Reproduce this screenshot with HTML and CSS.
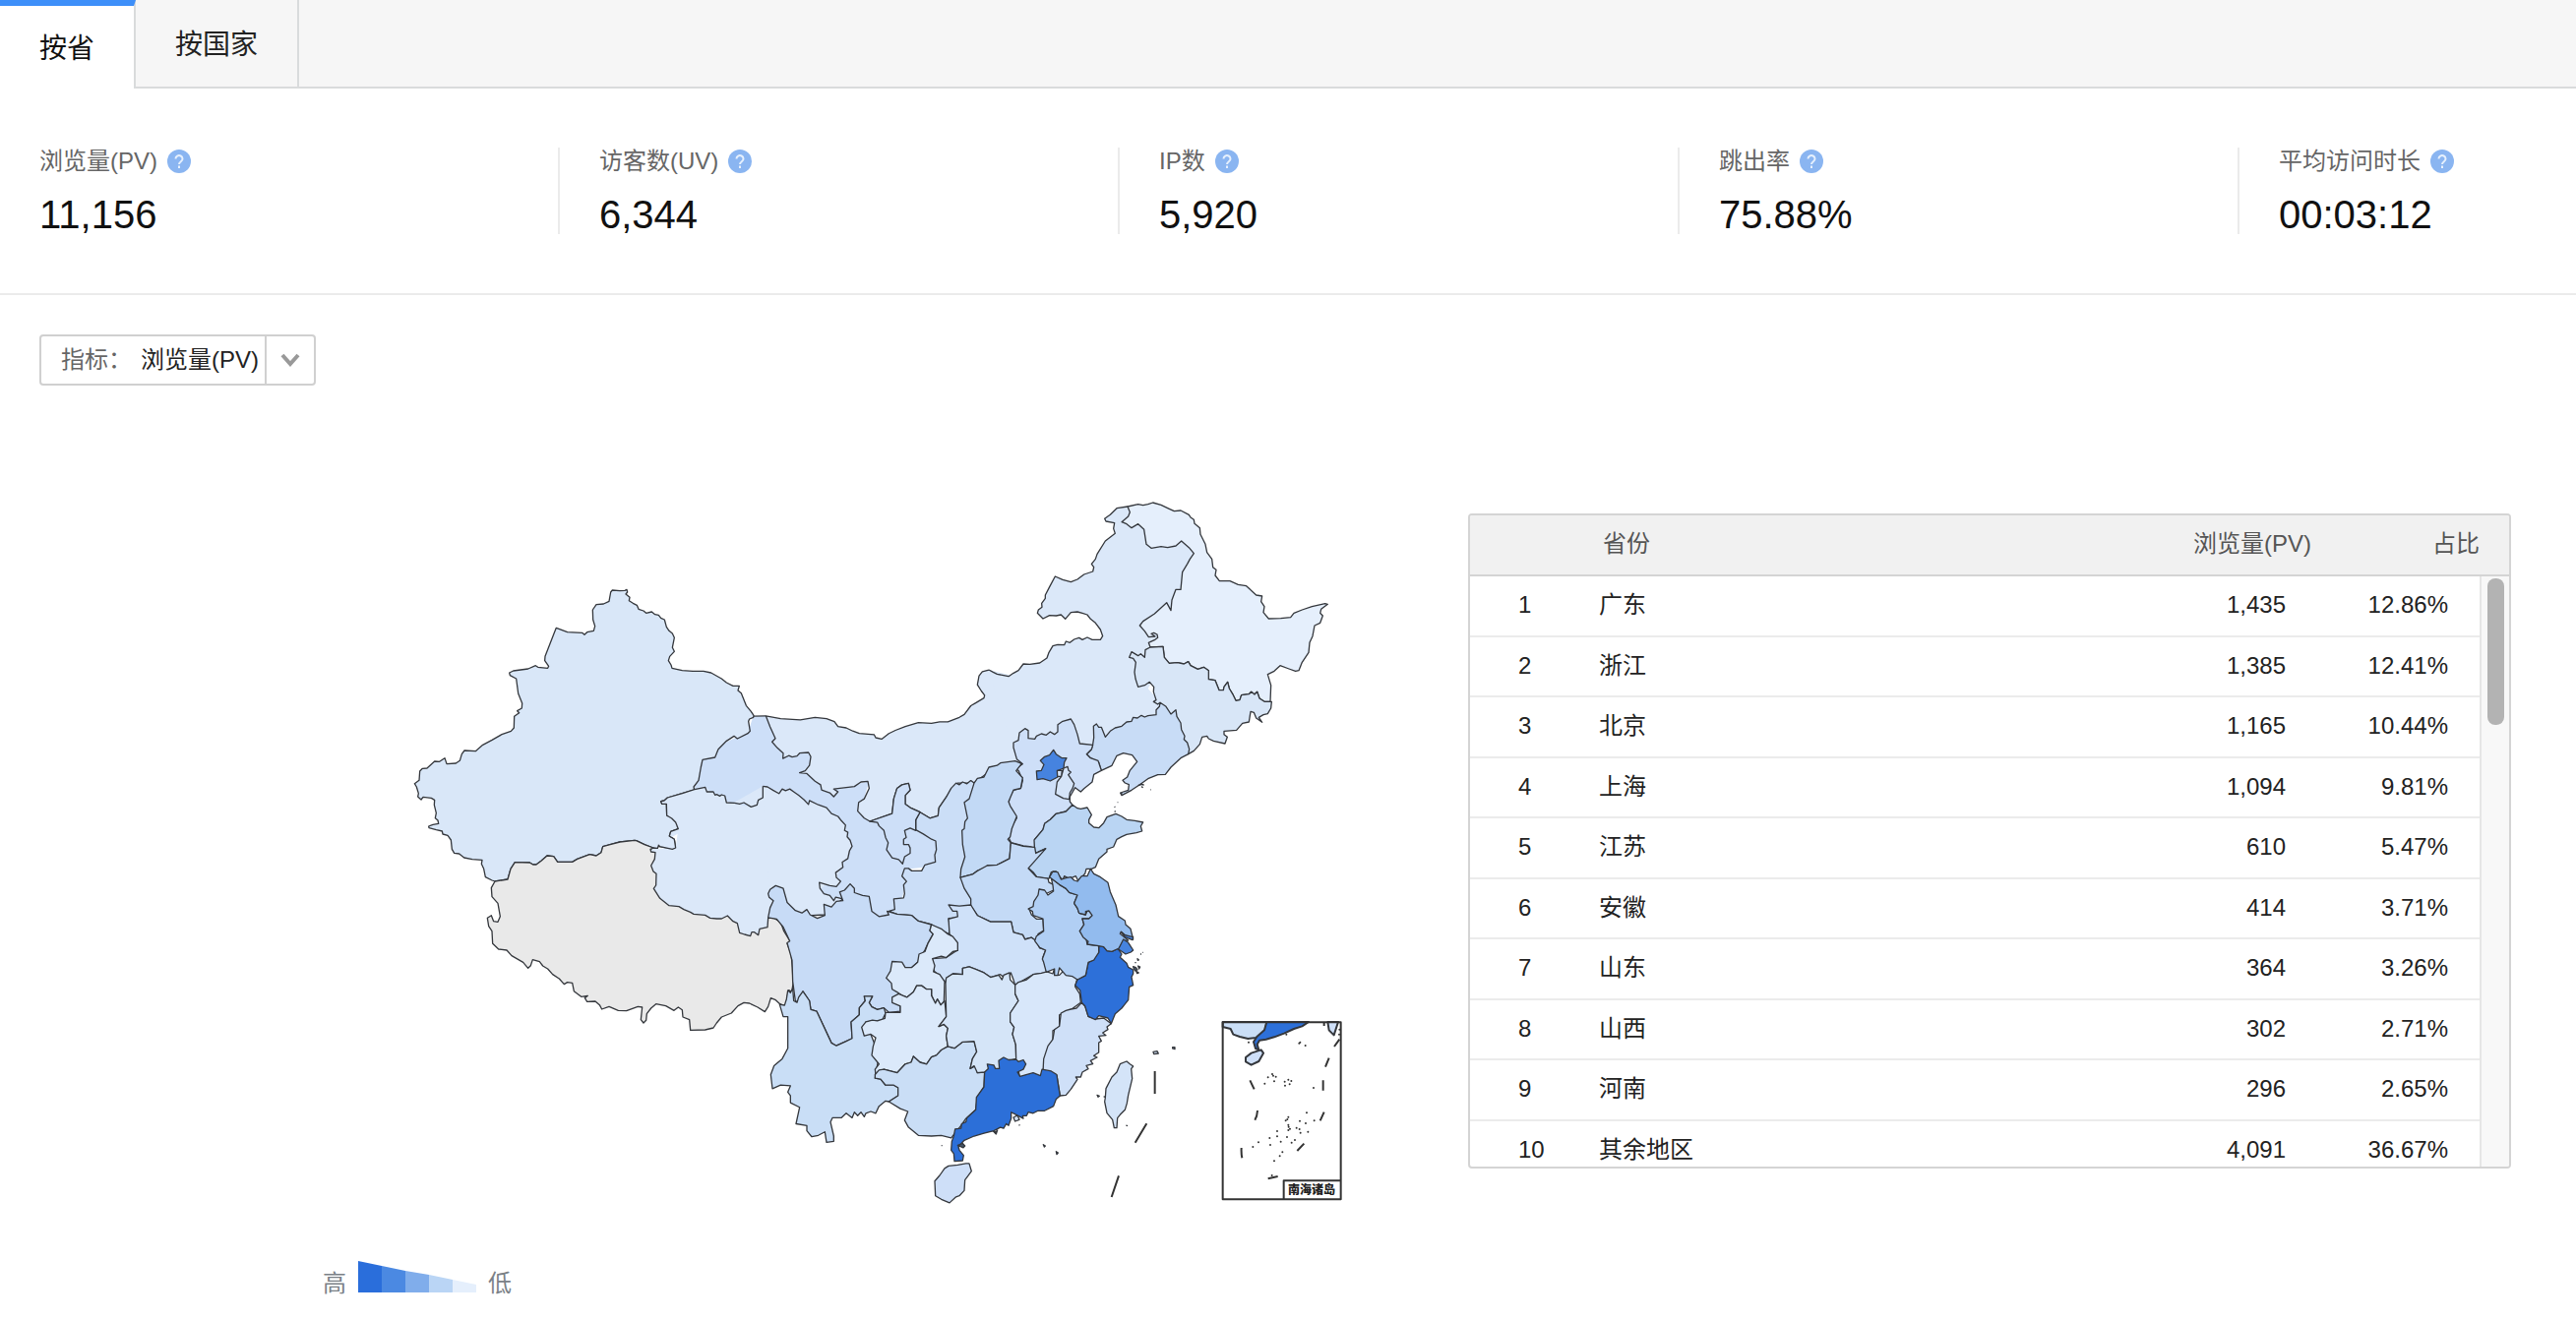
FILE: index.html
```html
<!DOCTYPE html>
<html lang="zh-CN">
<head>
<meta charset="utf-8">
<title>地域分布</title>
<link rel="stylesheet" href="styles.css">
</head>
<body>
<svg class="defs" width="0" height="0" aria-hidden="true">
  <symbol id="help" viewBox="0 0 24 24">
    <circle cx="12" cy="12" r="12" fill="#8ab5f1"/>
    <path d="M8.500 9.500a3.500 3.300 0 1 1 5.400 2.700c-1.300.9-1.900 1.400-1.900 2.800" fill="none" stroke="#e6f0fd" stroke-width="2"/>
    <rect x="11" y="16.500" width="2" height="2.500" fill="#e6f0fd"/>
  </symbol>
</svg>

<nav class="tabs">
  <button class="tab tab-active" type="button">按省</button>
  <button class="tab" type="button">按国家</button>
</nav>

<section class="metrics">
  <div class="metric"><div class="metric-name">浏览量(PV)<svg class="help"><use href="#help"/></svg></div><div class="metric-value">11,156</div></div>
  <div class="metric"><div class="metric-name">访客数(UV)<svg class="help"><use href="#help"/></svg></div><div class="metric-value">6,344</div></div>
  <div class="metric"><div class="metric-name">IP数<svg class="help"><use href="#help"/></svg></div><div class="metric-value">5,920</div></div>
  <div class="metric"><div class="metric-name">跳出率<svg class="help"><use href="#help"/></svg></div><div class="metric-value">75.88%</div></div>
  <div class="metric"><div class="metric-name">平均访问时长<svg class="help"><use href="#help"/></svg></div><div class="metric-value">00:03:12</div></div>
</section>

<div class="toolbar">
  <div class="picker">
    <label class="picker-label" for="indicator">指标：</label>
    <select class="picker-select" id="indicator"><option>浏览量(PV)</option><option>访客数(UV)</option><option>IP数</option></select>
    <svg class="picker-arrow" viewBox="0 0 48 48" aria-hidden="true"><path d="M16 19l8 9 8-9" fill="none" stroke="#999" stroke-width="4"/></svg>
  </div>
</div>

<main class="report">
  <div class="map-panel">
    <svg class="map" viewBox="400 500 980 740" stroke-width="1.3" role="img" aria-label="各省浏览量">
      <!-- Northwest: Gansu corridor under its neighbours -->
      <g transform="translate(760 680) scale(.333333 .357143)">
        <path class="flat" fill="#cddff8" d="M17 135L55 134 110 240 200 230 200 290 270 340 370 320 345 400 400 430 500 450 520 440 580 480 580 560 490 570 460 700 380 710 300 680 200 680 200 380 0 400-163 344-140 240 0 180Z"/>
        <path d="M17 135L55 134"/>
      </g>
      <g transform="translate(400 580) scale(.333333)">
        <path fill="#d9e7f8" d="M662 66L667 60 690 62 705 61 711 58 713 66 708 72 720 82 718 92 730 100 742 106 747 118 762 123 770 130 787 126 797 134 808 136 815 145 826 150 832 172 840 184 850 192 856 205 850 235 856 247 842 262 838 275 846 288 849 298 880 305 912 307 945 307 968 312 1000 330 1015 342 1035 352 1054 352 1050 366 1060 374 1075 412 1090 430 1098 442 1097 448 1085 453 1082 460 1087 490 1080 497 1048 513 1038 505 1015 520 990 545 980 570 942 577 937 600 930 640 915 660 917 669 880 680 835 693 825 702 815 704 818 712 832 712 833 747 848 756 860 768 868 788 845 796 841 810 856 820 860 846 850 850 812 842 808 838 805 847 792 846 765 836 740 824 735 823 690 828 660 836 638 842 633 860 618 870 598 866 560 880 545 889 500 889 488 872 468 870 450 886 435 897 425 897 415 891 370 890 357 910 348 942 309 948 300 945 280 935 275 910 268 895 270 883 240 881 215 876 200 864 185 862 178 850 175 822 165 808 150 804 148 795 130 791 108 785 107 780 120 775 137 772 135 762 127 755 130 740 124 715 125 700 115 694 90 691 84 699 74 690 76 680 70 660 64 650 78 640 80 612 88 604 102 603 125 582 140 583 156 572 162 590 190 588 202 580 208 560 216 549 250 551 272 532 300 517 330 500 358 490 367 480 368 445 383 434 377 428 391 420 392 405 380 375 374 330 355 320 353 312 365 306 410 300 433 290 440 295 470 298 473 292 461 275 462 262 490 190 496 175 530 188 575 190 582 196 590 188 610 184 614 170 608 150 607 120 618 104 640 102 657 94Z"/>
      </g>
      <!-- Inner Mongolia, western and eastern halves -->
      <g transform="translate(760 680) scale(.333333 .357143)">
        <path fill="#dbe8f9" d="M735 3L715 8 705 20 700 45 712 63 722 75 720 83 695 97 680 105 660 130 645 138 610 151 585 151 560 155 520 153 480 164 450 175 430 184 408 200 390 196 385 187 340 184 320 177 300 168 275 164 264 150 240 142 205 138 160 145 100 142 55 134 68 165 84 198 74 208 90 225 108 240 107 255 125 247 135 251 150 248 158 240 185 238 192 250 188 275 175 290 158 296 180 298 205 320 222 330 225 345 250 353 262 364 275 350 262 342 300 338 325 335 345 322 366 320 370 340 355 370 338 380 335 405 355 425 372 434 440 412 445 370 455 340 470 330 490 326 495 345 480 360 480 385 495 395 525 408 555 425 580 418 583 395 605 365 640 325 690 325 740 290 830 270 1000 220 1200 110"/>
      </g>
      <g transform="translate(980 500) scale(.333333)">
        <path class="flat" fill="#dbe8f9" d="M75 543L88 550 100 556 120 560 135 563 150 553 165 545 180 525 200 526 230 522 252 507 258 490 270 470 285 466 305 467 310 456 322 460 335 450 350 445 360 451 375 444 390 451 415 451 422 440 415 420 400 400 385 388 375 375 360 370 345 366 325 368 308 388 295 375 280 378 260 377 240 387 223 370 226 360 237 352 236 340 247 325 247 315 260 290 277 258 300 268 325 275 345 267 365 252 392 243 395 230 388 220 400 205 405 190 430 150 460 127 455 112 458 95 432 90 428 82 445 70 465 50 498 45 600 60 720 180 710 300 650 400 620 500 560 600 650 700 640 760 440 790 390 800 300 770 150 790Z"/>
        <path d="M75 543L88 550 100 556 120 560 135 563 150 553 165 545 180 525 200 526 230 522 252 507 258 490 270 470 285 466 305 467 310 456 322 460 335 450 350 445 360 451 375 444 390 451 415 451 422 440 415 420 400 400 385 388 375 375 360 370 345 366 325 368 308 388 295 375 280 378 260 377 240 387 223 370 226 360 237 352 236 340 247 325 247 315 260 290 277 258 300 268 325 275 345 267 365 252 392 243 395 230 388 220 400 205 405 190 430 150 460 127 455 112 458 95 432 90 428 82 445 70 465 50 498 45"/>
      </g>
      <!-- Qinghai and Tibet -->
      <g transform="translate(760 680) scale(.333333 .357143)">
        <path class="flat" fill="#dbe8f9" d="M46 334L160 365 300 450 310 500 270 600 60 709 0 700 0 390Z"/>
        <path fill="#dbe8f9" d="M46 334L60 336 78 346 95 355 105 342 115 347 128 342 140 350 155 360 172 373 185 386 188 375 215 387 240 395 255 412 275 420 285 432 298 445 295 460 305 465 303 478 312 488 318 505 310 518 305 540 288 550 290 565 268 580 270 594 283 605 270 620 250 617 218 608 220 625 232 640 250 645 262 660 268 650 290 655 270 670 235 700 60 709"/>
      </g>
      <g transform="translate(400 580) scale(.333333)">
        <path class="flat" fill="#dbe8f9" d="M1126 658L1126 693 1090 721 1015 708 950 661 917 668 835 693 833 747 868 788 860 846 783 850 770 900 780 1000 850 1060 1050 1120 1142 1110 1150 1060Z"/>
        <path fill="#dbe8f9" d="M1126 658L1126 693 1112 700 1108 715 1090 721 1068 708 1055 712 1040 709 1015 708 1010 687 1000 684 995 688 985 683 980 685 975 675 955 675 950 661 917 668 880 680 835 693 825 702 815 704 818 712 832 712 833 747 848 756 860 768 868 788 845 796 841 810 856 820 860 846 850 850 812 842 808 838 805 847 792 846 783 850"/>
        <path fill="#e9e9e9" d="M309 948L348 942 357 910 370 890 415 891 425 897 435 897 450 886 468 870 488 872 500 889 545 889 560 880 598 866 618 870 633 860 638 842 660 836 690 828 735 823 740 824 765 836 792 846 783 850 785 858 798 860 796 880 785 900 792 918 801 925 800 960 793 970 812 1000 840 1022 870 1025 885 1034 905 1042 915 1048 950 1051 965 1060 985 1062 1000 1062 1018 1053 1035 1070 1048 1076 1055 1105 1070 1110 1088 1115 1092 1103 1100 1103 1112 1112 1116 1093 1140 1088 1142 1060 1160 1060 1180 1072 1190 1100 1210 1132 1200 1138 1212 1170 1216 1210 1218 1260 1214 1285 1205 1280 1200 1300 1200 1320 1190 1327 1178 1322 1165 1310 1150 1304 1142 1330 1132 1346 1110 1332 1085 1320 1068 1318 1050 1328 1030 1350 1000 1362 985 1380 975 1395 950 1401 905 1402 902 1370 882 1362 880 1340 868 1332 855 1342 830 1328 800 1322 785 1335 772 1352 770 1372 762 1380 754 1370 758 1332 745 1330 710 1343 685 1342 657 1330 635 1338 628 1325 615 1314 590 1315 583 1304 592 1297 572 1300 550 1283 545 1258 530 1256 520 1262 505 1245 485 1232 470 1215 455 1206 445 1193 424 1187 418 1205 410 1213 395 1195 360 1175 345 1158 320 1155 302 1138 300 1100 290 1085 286 1060 298 1052 305 1070 318 1072 325 1055 318 1015 300 995 298 968Z"/>
      </g>
      <!-- Northeast and Hebei -->
      <g transform="translate(980 500) scale(.333333)">
        <path fill="#e5effc" d="M498 45L530 38 545 41 560 38 575 33 600 40 625 52 640 59 660 57 685 70 690 78 700 85 702 97 718 110 720 130 735 160 740 185 755 205 758 230 768 238 765 255 778 272 810 272 835 283 860 287 890 315 908 318 905 335 915 350 912 368 928 387 965 386 995 383 1005 370 1030 360 1060 350 1100 341 1108 343 1088 358 1085 370 1093 378 1085 400 1068 408 1062 440 1053 460 1050 490 1030 520 1020 545 1010 547 990 540 963 530 945 547 925 557 935 590 933 640 915 640 900 630 893 610 885 618 875 610 868 617 845 620 840 635 828 637 820 620 808 600 803 580 792 595 790 605 777 605 765 575 745 572 745 545 730 535 712 541 690 530 683 518 670 525 650 521 625 523 610 505 606 472 567 474 562 460 580 452 590 445 588 435 578 430 570 433 582 441 562 443 550 425 535 408 545 395 580 372 617 338 630 362 633 330 645 298 660 298 665 245 680 220 688 205 700 188 685 170 662 150 645 165 620 170 600 167 570 172 555 160 548 115 530 98 510 110 495 98 480 92 500 75 505 62Z"/>
        <path fill="#d8e6f7" d="M567 474L606 472 610 505 625 523 650 521 670 525 683 518 690 530 712 541 730 535 745 545 745 572 765 575 777 605 790 605 792 595 803 580 808 600 820 620 828 637 840 635 845 620 868 617 875 610 885 618 893 610 900 630 915 640 937 640 935 660 925 677 912 680 898 688 908 703 890 690 883 673 873 670 868 702 848 706 830 727 792 730 792 740 802 748 795 768 760 760 745 753 740 745 725 748 718 770 700 790 683 800 640 720 597 643 590 648 577 640 585 635 577 610 578 595 565 580 550 590 530 595 522 570 519 550 523 520 515 508 503 505 510 488 530 500 538 494 550 505 552 482Z"/>
        <path fill="#c8dcf6" d="M597 643L615 655 630 678 645 665 648 685 660 705 662 725 672 745 670 755 680 765 686 785 683 800 660 812 630 840 613 862 590 863 560 875 535 893 510 910 480 926 476 918 500 910 502 893 490 888 483 880 497 870 505 850 527 823 512 803 485 797 465 805 450 835 418 850 410 825 385 812 373 800 388 785 392 770 395 750 394 715 403 708 410 718 418 718 430 748 445 730 460 720 480 715 495 702 510 700 515 688 528 690 540 682 550 687 560 683 585 680 585 665 595 655Z"/>
        <path fill="#cedff8" d="M150 765L165 758 168 735 185 722 195 728 195 752 215 754 220 745 235 738 250 742 262 732 275 740 285 732 285 710 300 700 325 693 335 710 345 740 352 768 392 772 388 785 373 800 385 812 408 820 418 850 395 862 390 885 365 905 355 915 338 902 322 930 322 945 330 955 310 975 280 982 262 1000 245 1012 240 1030 215 1060 215 1088 200 1082 180 1080 143 1070 133 1050 145 1020 160 995 135 955 138 930 150 910 172 905 178 880 165 850 155 845 178 830 160 815 150 780Z"/>
        <path fill="#4683df" d="M272 787L280 800 298 812 312 812 305 825 303 843 285 850 285 870 262 882 240 875 222 878 220 852 235 850 243 832 232 820 245 808 260 803Z"/>
        <path fill="#d5e4f8" d="M283 850L298 850 296 868 284 868ZM303 843L315 838 318 850 325 855 317 863 325 875 335 890 330 905 322 918 320 938 302 935 278 922 283 885 296 868Z"/>
        <path fill="#bad5f3" d="M330 955L345 965 355 967 375 963 388 985 380 1000 380 1010 395 1023 410 1025 425 1010 435 992 462 982 480 990 495 1000 520 1003 545 1008 538 1020 542 1035 525 1040 495 1045 480 1052 465 1060 455 1083 435 1090 435 1098 410 1120 400 1145 388 1150 372 1150 368 1165 355 1178 348 1188 340 1172 320 1180 305 1172 300 1185 288 1170 280 1158 265 1160 258 1180 222 1176 210 1160 193 1145 205 1125 225 1110 248 1088 225 1098 215 1102 213 1062 240 1030 245 1012 262 1000 280 982 310 975Z"/>
      </g>
      <!-- Central and southern provinces -->
      <g transform="translate(760 680) scale(.333333 .357143)">
        <path fill="#cbdef7" d="M690 325L680 318 668 327 655 322 645 330 635 325 620 340 605 365 583 395 580 418 555 425 525 408 512 430 512 458 535 470 560 485 573 490 575 515 570 530 572 550 540 558 530 575 500 575 490 568 478 568 470 590 484 605 475 615 478 640 475 652 445 655 448 685 430 690 455 698 500 702 520 718 560 728 590 745 615 755 615 730 612 710 640 708 680 672 700 500Z"/>
        <path fill="#cddff8" d="M372 434L395 437 400 447 415 460 420 480 428 495 423 515 440 538 460 543 472 555 478 535 495 525 495 510 490 500 475 500 475 485 483 480 478 460 495 453 512 460 512 430 525 408 495 395 480 385 480 360 495 345 490 326 470 330 455 340 445 370 440 412Z"/>
        <path fill="#c2d9f5" d="M690 325L700 312 720 308 735 280 760 275 770 268 815 262 835 270 818 290 838 310 832 340 810 345 795 378 800 390 820 420 805 455 800 478 793 485 802 495 798 540 760 558 730 560 722 568 700 575 685 585 648 594 650 570 662 535 655 500 653 460 660 455 662 435 670 425 660 380 675 370Z"/>
        <path fill="#c4daf6" d="M648 594L685 585 700 575 730 560 760 558 798 540 802 495 840 505 875 508 878 525 908 512 855 568 880 592 915 597 918 608 934 615 932 630 905 642 890 628 885 650 873 665 872 680 857 682 865 700 880 712 900 712 902 745 885 755 880 775 865 765 845 770 838 757 810 750 803 720 775 720 740 720 700 702 680 675 680 655 660 625Z"/>
        <path fill="#cfe1f9" d="M612 672L645 675 680 672 700 702 740 720 775 720 803 720 810 750 838 757 845 770 865 765 880 775 890 795 908 800 900 820 912 865 870 870 815 900 810 885 802 865 790 885 770 870 740 878 720 865 675 848 655 852 655 870 625 868 605 880 603 895 585 875 568 860 563 825 605 822 640 800 640 780 615 755 612 712 640 705 638 690 625 690Z"/>
        <path fill="#c7dbf6" d="M62 640L68 628 85 617 108 625 120 665 145 688 165 695 180 685 190 700 212 710 235 702 232 670 255 678 270 662 290 660 280 635 295 630 312 612 325 625 325 637 350 645 370 648 378 690 400 705 430 700 425 690 455 698 500 702 520 718 560 728 555 745 565 755 550 780 540 800 518 835 500 850 480 850 500 930 465 960 465 975 430 978 415 965 395 970 378 962 370 950 380 932 355 932 358 945 340 965 340 985 315 1005 318 1052 300 1060 270 1073 255 1065 240 1035 210 975 192 970 188 945 168 918 155 950 145 945 137 890 135 830 120 780 128 775 108 735 88 712 62 708 68 680 78 660 65 650Z"/>
        <path fill="#dbe9fa" d="M560 728L590 740 610 755 625 762 640 780 640 802 625 805 605 822 590 818 563 825 570 845 566 862 585 870 600 890 598 950 588 957 578 940 572 952 560 930 560 912 545 912 530 902 515 902 505 920 485 935 470 930 455 920 440 912 438 895 422 880 435 860 440 833 470 835 480 850 500 850 518 835 522 812 540 805 550 780 565 755 555 745Z"/>
        <path fill="#c9def6" d="M97 955L112 958 118 940 122 915 130 922 137 910 140 945 150 950 155 935 168 918 188 945 192 970 210 975 240 1035 255 1065 270 1073 300 1060 318 1052 315 1005 340 985 340 965 358 945 355 932 380 932 370 950 378 962 395 970 415 965 420 980 410 1000 360 1005 400 1100 390 1155 388 1165 405 1168 420 1185 445 1185 458 1192 458 1215 430 1232 420 1230 400 1245 390 1265 375 1260 360 1265 355 1275 345 1262 335 1272 325 1262 318 1278 300 1265 285 1278 258 1278 252 1290 262 1330 262 1345 240 1348 235 1318 215 1328 195 1332 180 1315 180 1300 147 1295 158 1248 130 1235 130 1215 122 1205 130 1187 100 1185 75 1195 70 1155 80 1130 105 1110 122 1080 122 990 108 990Z"/>
        <path fill="#dbe9fa" d="M440 935L460 925 485 935 505 920 515 902 530 902 545 912 560 912 560 930 572 952 578 940 588 957 600 945 603 970 605 990 582 1018 598 1012 610 1023 605 1045 610 1075 590 1085 575 1100 560 1105 545 1125 525 1120 505 1103 498 1120 480 1125 455 1150 415 1140 390 1155 388 1140 400 1125 378 1100 382 1075 390 1050 375 1040 355 1045 347 1020 360 1005 380 1000 395 1002 418 995 420 978 465 978 465 960 440 950Z"/>
        <path fill="#cadef6" d="M388 1155L400 1142 415 1140 435 1145 455 1150 480 1125 498 1120 505 1103 525 1120 545 1125 560 1105 575 1100 590 1085 610 1075 630 1080 655 1062 690 1060 698 1090 685 1110 678 1138 695 1130 700 1150 722 1148 720 1190 700 1220 695 1255 665 1280 650 1300 620 1335 590 1328 560 1330 520 1328 490 1305 478 1285 488 1260 465 1252 430 1232 458 1215 458 1192 445 1185 420 1185 405 1168 388 1165Z"/>
        <path fill="#d5e5f8" d="M603 895L605 880 625 868 655 870 655 852 675 848 695 855 720 865 740 878 765 872 775 885 780 872 798 865 800 885 815 900 815 925 825 945 800 980 800 1005 812 1020 807 1040 817 1070 818 1110 780 1120 765 1140 722 1148 700 1150 690 1130 678 1138 685 1110 698 1090 690 1060 655 1062 630 1080 610 1075 605 1045 610 1023 598 1012 582 1018 605 990Z"/>
        <path fill="#d8e7fa" d="M815 900L825 892 850 885 870 870 895 866 912 862 930 868 935 852 945 858 938 872 950 872 960 862 980 870 1005 880 998 905 1012 925 1015 950 985 970 950 985 950 1020 930 1030 930 1060 905 1110 900 1150 895 1165 830 1165 818 1112 817 1070 807 1040 812 1020 800 1005 800 980 825 945 815 925Z"/>
      </g>
      <g transform="translate(1000 860) scale(.333333)">
        <path fill="#cfe0f8" d="M298 478L308 488 318 520 340 528 365 525 388 542 375 552 378 560 362 570 372 578 350 580 358 595 350 600 350 630 335 640 345 645 325 655 332 665 312 670 318 680 300 690 295 705 280 705 285 712 265 742 250 760 232 762 222 700 180 690 182 650 195 610 210 590 215 560 230 550 235 510 250 502 265 498 282 495Z"/>
        <path fill="#2d70d9" d="M350 305L365 308 375 320 390 322 408 313 420 330 415 340 435 358 440 370 455 378 455 390 450 400 455 425 443 430 440 470 428 485 420 495 400 512 388 542 378 525 350 518 340 530 318 520 308 488 298 478 293 440 278 425 285 408 310 395 318 355 335 348 340 330 350 325Z"/>
        <path fill="#b1cff4" d="M205 98L230 118 250 130 260 142 285 150 275 175 285 190 290 205 310 210 315 198 328 202 330 215 320 222 300 222 305 240 292 260 312 285 315 300 350 305 350 325 335 348 318 355 310 395 285 408 270 398 250 395 230 372 225 395 215 395 215 375 190 385 182 355 178 345 188 318 170 310 155 290 160 275 182 260 180 222 150 212 148 200 135 192 150 185 152 170 165 150 168 132 185 135 195 150 212 138 210 120Z"/>
        <path fill="#92bbee" d="M200 95L210 78 225 80 235 102 250 98 265 95 275 105 285 108 298 92 315 92 325 70 335 85 355 95 378 112 385 140 402 180 410 215 430 228 432 240 447 253 455 285 430 272 418 262 415 268 440 288 425 290 412 312 390 322 375 320 365 308 350 305 315 300 318 292 302 278 292 260 305 240 300 222 320 222 330 212 320 198 310 200 310 210 290 205 285 190 275 175 285 150 260 142 250 130 230 118Z"/>
        <path fill="#4683df" d="M425 285L440 295 455 318 448 324 432 330 410 315ZM418 262L430 272 455 278 453 287 430 278Z"/>
        <path fill="#d4e4f8" d="M435 657L445 665 455 672 449 680 452 710 440 760 436 785 430 805 415 820 407 830 405 860 397 860 392 835 375 815 368 780 370 768 372 740 390 705 405 690 415 665ZM516 628L528 626 532 633 518 635ZM575 614L582 614 582 620 575 618ZM90 828L102 822 108 835 95 840Z"/>
        <path fill="#456" d="M455 368l8 3 5 7-7 3-4-6zM464 382l8 5-5 2zM470 366l6 3-3 6zM468 344l4 4-3 1zM460 356h4M477 330h3M484 325h2M345 760l7 3-4 3zM365 764l4 2M433 852l5 2M181 911l6 4-3 3zM220 932l6 4-4 5zM107 850l2 3M26 868l10 5 5-6-4 12z"/>
        <path class="dash" d="M521 687V756M496 847L461 905M411 1006L389 1071"/>
      </g>
      <g transform="translate(760 680) scale(.333333 .357143)">
        <path fill="#2c6fd8" d="M722 1148L733 1138 730 1125 750 1128 755 1138 767 1138 765 1115 780 1106 795 1113 818 1112 825 1118 840 1113 848 1125 840 1140 822 1148 830 1160 870 1150 892 1158 897 1140 925 1145 942 1155 945 1175 952 1215 940 1225 932 1245 905 1258 885 1258 870 1265 855 1262 850 1272 838 1272 840 1280 820 1270 803 1262 803 1280 795 1300 788 1295 780 1308 770 1305 750 1315 720 1322 690 1330 660 1342 642 1360 645 1370 658 1385 655 1400 630 1402 628 1380 620 1370 622 1345 628 1330 632 1310 650 1308 652 1295 665 1290 668 1278 695 1255 697 1220 720 1190Z"/>
        <path fill="#cedff8" d="M600 1422L612 1415 640 1412 665 1408 675 1408 682 1430 670 1445 662 1455 660 1485 645 1500 635 1503 615 1520 590 1510 572 1500 570 1458 585 1442Z"/>
        <path fill="#456" d="M590 1357h3M640 1356l15-5 7 7-5 5zM1136 354l6 2M1190 332l10-4 8 3M1200 335l5 3M1228 344h2M1118 392l2 2M1127 380h2M1118 405l3 2"/>
      </g>
      <!-- South China Sea inset -->
      <g transform="translate(1000 860) scale(.333333)">
        <path class="bold" fill="#cadef6" d="M728 537H862L858 560 845 575 830 585 805 588 780 582 760 575 752 558 728 552Z"/>
        <path class="bold" fill="#2d70d9" d="M862 537H990L970 550 945 558 915 572 885 583 860 590 840 593 833 605 838 622 828 618 822 598 832 582 855 562Z"/>
        <path class="bold" fill="#cedff8" d="M815 632L845 622 852 632 838 657 815 668 798 658 798 645ZM1048 537L1052 562 1067 577 1080 537Z"/>
        <path class="dash" d="M1037 537v12M1084 590L1068 612M1052 647L1041 674M1034 715V746M1037 812L1025 838M976 908L955 930M896 1008L866 1015M785 921Q784 938 787 952M834 807Q833 825 826 836M811 715L824 742"/>
        <path class="dots" d="M807 599h0M961 602h0M964 599h0M980 609h0M856 725h0M866 706h0M879 696h0M882 701h0M890 704h0M885 718h0M917 719h0M928 713h0M937 717h0M932 727h0M918 731h0M1005 738h0M984 814h0M928 827h0M925 834h0M920 838h0M963 839h0M1007 838h0M981 846h0M928 851h0M929 857h0M933 863h0M928 867h0M953 860h0M962 864h0M965 875h0M988 872h0M894 870h0M894 886h0M871 891h0M924 888h0M948 897h0M905 902h0M938 905h0M873 912h0M837 904h0M820 918h0M910 934h0M902 946h0M885 961h0M878 1005h0M922 575h0M1084 560h0M1083 575h0"/>
        <path class="frame" d="M728 538H1088V1078H728ZM914 1078V1021H1088"/>
      </g>
      <text class="inset-name" x="1309" y="1214">南海诸岛</text>
    </svg>
    <div class="legend">
      <span class="legend-end">高</span>
      <svg class="legend-ramp" viewBox="0 0 120 32" aria-hidden="true">
        <path fill="#2a6edb" d="M0 0L24 5V32H0Z"/><path fill="#4b89e2" d="M24 5L48 10V32H24Z"/><path fill="#80adeb" d="M48 10L72 14V32H48Z"/><path fill="#bad5f5" d="M72 14L96 19V32H72Z"/><path fill="#e5effc" d="M96 19L120 24V32H96Z"/>
      </svg>
      <span class="legend-end">低</span>
    </div>
  </div>

  <div class="list">
    <table class="provinces">
      <thead><tr><th></th><th>省份</th><th>浏览量(PV)</th><th>占比</th></tr></thead>
      <tbody>
        <tr><td>1</td><td>广东</td><td>1,435</td><td>12.86%</td></tr>
        <tr><td>2</td><td>浙江</td><td>1,385</td><td>12.41%</td></tr>
        <tr><td>3</td><td>北京</td><td>1,165</td><td>10.44%</td></tr>
        <tr><td>4</td><td>上海</td><td>1,094</td><td>9.81%</td></tr>
        <tr><td>5</td><td>江苏</td><td>610</td><td>5.47%</td></tr>
        <tr><td>6</td><td>安徽</td><td>414</td><td>3.71%</td></tr>
        <tr><td>7</td><td>山东</td><td>364</td><td>3.26%</td></tr>
        <tr><td>8</td><td>山西</td><td>302</td><td>2.71%</td></tr>
        <tr><td>9</td><td>河南</td><td>296</td><td>2.65%</td></tr>
        <tr><td>10</td><td>其余地区</td><td>4,091</td><td>36.67%</td></tr>
      </tbody>
    </table>
    <div class="scrollbar"><div class="scrollbar-thumb"></div></div>
  </div>
</main>
</body>
</html>
```
FILE: styles.css
```css
* { box-sizing: border-box; }

body {
  margin: 0;
  background: #fff;
  color: #222;
  font-family: "Liberation Sans", "Noto Sans CJK SC", sans-serif;
  font-size: 24px;
  line-height: 36px;
}

.defs { position: absolute; }

.tabs {
  display: flex;
  height: 90px;
  background: linear-gradient(#d9dbdc, #d9dbdc) bottom / 100% 2px no-repeat #f6f6f6;
}

.tab {
  padding: 2px 40px 0;
  border: 0;
  border-right: 2px solid #d9dbdc;
  background: none;
  color: #222;
  font: inherit;
  font-size: 28px;
}

.tab-active {
  padding-top: 4px;
  border-top: 6px solid #3d8ff9;
  background: #fff;
  color: #111;
}

.metrics {
  display: grid;
  grid-template-columns: repeat(4, minmax(0, 569fr)) minmax(0, 342fr);
  padding: 60px 0;
  border-bottom: 2px solid #ebebeb;
}

.metric {
  height: 88px;
  padding-left: 40px;
  border-right: 2px solid #ebebeb;
}

.metric:last-child { border-right: 0; }

.metric-name {
  display: flex;
  align-items: center;
  gap: 10px;
  height: 28px;
  color: #666;
  line-height: 28px;
  white-space: nowrap;
}

.help { width: 24px; height: 24px; }

.metric-value {
  margin-top: 16px;
  color: #111;
  font-size: 40px;
  line-height: 48px;
}

.toolbar { padding: 40px 40px 0; }

.picker {
  display: inline-grid;
  grid-template-columns: auto auto 50px;
  height: 52px;
  border: 2px solid #d0d0d0;
  border-radius: 4px;
  vertical-align: top;
}

.picker-label {
  padding-left: 20px;
  color: #666;
  line-height: 48px;
}

.picker-select {
  grid-column: 2 / 4;
  grid-row: 1;
  width: 176px;
  margin-left: 9px;
  padding: 0;
  border: 0;
  background: none;
  color: #222;
  font: inherit;
  appearance: none;
}

.picker-arrow {
  grid-column: 3;
  grid-row: 1;
  width: 50px;
  height: 48px;
  border-left: 2px solid #d0d0d0;
  pointer-events: none;
}

.report {
  display: grid;
  grid-template-columns: minmax(0, 1492fr) minmax(0, 1060fr) minmax(0, 66fr);
  align-items: start;
}

.map-panel { padding: 108px 0 12px 328px; }

.map {
  display: block;
  width: 980px;
  max-width: 100%;
  margin-left: 72px;
}

.map path {
  stroke: #34373c;
  stroke-linejoin: round;
  vector-effect: non-scaling-stroke;
}

.map path:not([fill]) { fill: none; }
.map .flat { stroke: none; }
.map .bold { stroke-width: 2; }
.map .dash { stroke: #333; stroke-width: 2; }
.map .dots { stroke: #333; stroke-width: 2; stroke-linecap: round; }
.map .frame { stroke: #333; stroke-width: 2; }

.inset-name {
  fill: #222;
  font-size: 12px;
  font-weight: 900;
}

.legend {
  display: flex;
  align-items: center;
  gap: 12px;
  margin-top: 33px;
  color: #7b8187;
}

.legend-end { padding-top: 14px; }

.legend-ramp { width: 120px; height: 32px; }

.list {
  position: relative;
  height: 666px;
  margin-top: 130px;
  overflow: hidden;
  border: 2px solid #d4d4d4;
  border-radius: 4px;
}

.provinces, .provinces thead, .provinces tbody { display: block; }

.provinces tr {
  display: grid;
  grid-template-columns: 82px minmax(0, 1fr) 200px 165px;
  height: 61px;
  padding: 0 62px 0 49px;
  border-bottom: 2px solid #ebebeb;
}

.provinces tbody tr:nth-child(odd) { height: 62px; }

.provinces thead tr {
  grid-template-columns: 86px minmax(0, 1fr) 200px 171px;
  height: 62px;
  padding-right: 30px;
  border-bottom-color: #d4d4d4;
  background: #f1f1f1;
}

.provinces th, .provinces td {
  padding: 0;
  font-weight: normal;
  line-height: 58px;
  text-align: left;
  white-space: nowrap;
}

.provinces th { color: #555; }

.provinces th:nth-child(n+3), .provinces td:nth-child(n+3) { text-align: right; }

.scrollbar {
  position: absolute;
  top: 62px;
  right: 0;
  bottom: 0;
  width: 30px;
  padding: 2px 5px 0 6px;
  border-left: 2px solid #e6e6e6;
  background: #f8f8f8;
}

.scrollbar-thumb {
  height: 149px;
  border-radius: 8px;
  background: #b3b3b3;
}
```
